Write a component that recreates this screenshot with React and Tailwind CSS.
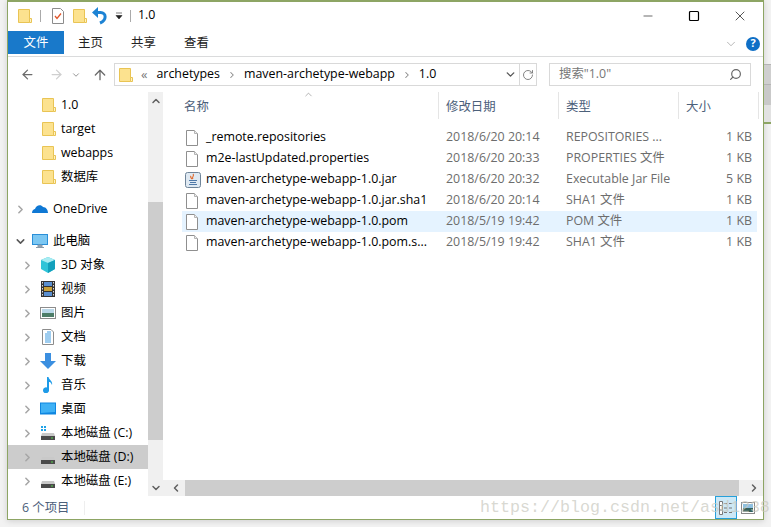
import React from "react";
import { ChevronRight, ChevronDown, ChevronUp, ChevronLeft, ArrowLeft, ArrowRight, ArrowUp, RotateCw, Search, Minus, Square, X } from "lucide-react";

const FONT = '"Open Sans","Noto Sans CJK SC",sans-serif';

function Folder({ s = 16 }) {
  return (
    <svg width={s} height={s} viewBox="0 0 16 16" className="shrink-0">
      <path d="M1.500 1.500H12.500V14.500H1.500Z" fill="#fce28f" stroke="#e9c454" />
      <path d="M12.500 10.500H14.500V14.500H12.500Z" fill="#fff3c4" stroke="#e9c454" />
    </svg>
  );
}
function FileIcon() {
  return (
    <svg width="14" height="16" viewBox="0 0 14 16" className="shrink-0">
      <path d="M1.500 .5H9.500L12.500 3.500V15.500H1.500Z" fill="#fff" stroke="#8f8f8f" />
      <path d="M9.500 .5V3.500H12.500" fill="#eee" stroke="#b5b5b5" />
    </svg>
  );
}
function JarIcon() {
  return (
    <svg width="16" height="16" viewBox="0 0 16 16" className="shrink-0">
      <rect x=".5" y=".5" width="15" height="15" rx="2" fill="#dfe9f2" stroke="#6f8499" />
      <path d="M8 2c2 2-2 3 0 5M6 4c-1 1 0 2 1 3" fill="none" stroke="#e0672a" strokeWidth="1.100" />
      <path d="M4 8.500h8M5 10.500h6M4 12.500h8" stroke="#4f79a8" strokeWidth="1" />
    </svg>
  );
}
function PcIcon() {
  return (
    <svg width="16" height="16" viewBox="0 0 16 16" className="shrink-0">
      <rect x=".5" y="1.500" width="15" height="10" fill="#7cc7f2" stroke="#2a8fd8" />
      <path d="M6 12h4v2H6zM4 14.500h8" fill="#9ab" stroke="#8a9aa8" />
    </svg>
  );
}
function Cube() {
  return (
    <svg width="16" height="16" viewBox="0 0 16 16" className="shrink-0">
      <path d="M8 0L15 3V12L8 16L1 12V3Z" fill="#2fc4d8" />
      <path d="M8 0L15 3L8 6L1 3Z" fill="#a8ecf2" />
      <path d="M8 6L15 3V12L8 16Z" fill="#12a0bc" />
    </svg>
  );
}
function Film() {
  return (
    <svg width="16" height="16" viewBox="0 0 16 16" className="shrink-0">
      <rect x="1" width="14" height="16" fill="#333" />
      <rect x="4" y="1" width="8" height="4" fill="#5a8fd0" />
      <rect x="4" y="6" width="8" height="4" fill="#c9a13a" />
      <rect x="4" y="11" width="8" height="4" fill="#5a8fd0" />
      <path d="M2.500 1v14M13.500 1v14" stroke="#ddd" strokeDasharray="1.500 1.500" />
    </svg>
  );
}
function Pic() {
  return (
    <svg width="16" height="16" viewBox="0 0 16 16" className="shrink-0">
      <rect x=".5" y="2.500" width="15" height="11" fill="#fff" stroke="#8c8c8c" />
      <rect x="2" y="4" width="12" height="4" fill="#b9d7e8" />
      <rect x="2" y="8" width="12" height="4" fill="#4d7d68" />
    </svg>
  );
}
function Doc() {
  return (
    <svg width="16" height="16" viewBox="0 0 16 16" className="shrink-0">
      <path d="M2.500 .5H11L13.500 3V15.500H2.500Z" fill="#fff" stroke="#8c8c8c" />
      <path d="M7 3h4M5 5h6M5 7h6M5 9h6M5 11h6M5 13h6" stroke="#3f9be0" />
    </svg>
  );
}
function Down() {
  return (
    <svg width="16" height="16" viewBox="0 0 16 16" className="shrink-0">
      <path d="M5 0H11V8H16L8 16L0 8H5Z" fill="#3b8fe0" />
    </svg>
  );
}
function Music() {
  return (
    <svg width="16" height="16" viewBox="0 0 16 16" className="shrink-0">
      <path d="M7 0H8.500C9 3 13 4 12 8C11 5.500 10 5 9 5V13A3 3 0 1 1 7 10.500Z" fill="#1e9be8" />
    </svg>
  );
}
function Desk() {
  return (
    <svg width="16" height="16" viewBox="0 0 16 16" className="shrink-0">
      <rect y="1.500" width="16" height="12" fill="#0f86e0" />
      <path d="M1 2.500H15V11L1 12Z" fill="#3fb1f5" />
    </svg>
  );
}
function Drive({ win }) {
  return (
    <svg width="16" height="16" viewBox="0 0 16 16" className="shrink-0">
      {win && <path d="M1 1h2v2H1zM4 1h2v2H4zM1 4h2v2H1zM4 4h2v2H4z" fill="#1fa3e8" />}
      <path d="M2 8H14L15 11H1Z" fill="#c9c9c9" />
      <rect x="1" y="11" width="14" height="4" fill="#4a4a4a" />
      <rect x="11" y="12.500" width="2" height="1" fill="#53d04b" />
    </svg>
  );
}
function Cloud() {
  return (
    <svg width="16" height="16" viewBox="0 0 16 16" className="shrink-0">
      <path d="M0 12C0 9 2 8 3 8C4 4 9 3 11 6C14 6 16 9 16 12Z" fill="#0f78d4" />
    </svg>
  );
}

function NavRow({ icon, label, level = 0, arrow, active, className = "" }) {
  return (
    <div className={`h-6 flex items-center shrink-0 ${active ? "bg-[#cccccc]" : ""} ${className}`}>
      <div className={`flex justify-center shrink-0 ${level === 1 ? "w-[32px] pl-[6px]" : "w-[23px] pl-[1px] mr-[1px]"}`}>
        {arrow === "r" && <ChevronRight size={13} strokeWidth={2.800} className="text-[#a6a6a6]" />}
        {arrow === "d" && <ChevronDown size={13} strokeWidth={2.800} className="text-[#595959]" />}
      </div>
      {icon}
      <span className={`${level === 3 ? "ml-[4px]" : "ml-[5px]"} text-black whitespace-nowrap`}>{label}</span>
    </div>
  );
}

const rows = [
  { i: <FileIcon />, n: "_remote.repositories", d: "2018/6/20 20:14", t: "REPOSITORIES ...", s: "1 KB" },
  { i: <FileIcon />, n: "m2e-lastUpdated.properties", d: "2018/6/20 20:33", t: "PROPERTIES 文件", s: "1 KB" },
  { i: <JarIcon />, n: "maven-archetype-webapp-1.0.jar", d: "2018/6/20 20:32", t: "Executable Jar File", s: "5 KB" },
  { i: <FileIcon />, n: "maven-archetype-webapp-1.0.jar.sha1", d: "2018/6/20 20:14", t: "SHA1 文件", s: "1 KB" },
  { i: <FileIcon />, n: "maven-archetype-webapp-1.0.pom", d: "2018/5/19 19:42", t: "POM 文件", s: "1 KB", sel: true },
  { i: <FileIcon />, n: "maven-archetype-webapp-1.0.pom.s...", d: "2018/5/19 19:42", t: "SHA1 文件", s: "1 KB" },
];

export default function App() {
  return (
    <div className="w-[771px] h-[527px] bg-[#f2f2f2] overflow-hidden relative flex items-start" style={{ fontFamily: FONT }}>
      <div className="ml-[7px] w-[757px] h-[520px] bg-white border border-t-2 border-[#8da564] flex flex-col text-[12.4px] shadow-[0_1px_6px_rgba(0,0,0,0.15)] shrink-0">
        {/* title bar */}
        <div className="h-[29px] flex items-center shrink-0 pl-[9px] -mt-px">
          <Folder />
          <div className="w-px h-3 bg-[#aaa] ml-[7px]" />
          <svg width="14" height="16" viewBox="0 0 14 16" className="ml-[10px]">
            <path d="M1.500 .5H9.500L12.500 3.500V15.500H1.500Z" fill="#fff" stroke="#8c8c8c" />
            <path d="M4 8L6 10.500L10 5.500" fill="none" stroke="#e0562a" strokeWidth="1.300" />
          </svg>
          <div className="ml-[7px]"><Folder /></div>
          <svg width="16" height="18" viewBox="0 0 16 18" className="ml-[4px]">
            <path d="M0 5.500L6 0V11Z" fill="#1d83d4" />
            <path d="M5 5.500H8.500C14.500 5.500 15 13 8 16" fill="none" stroke="#1d83d4" strokeWidth="3" />
          </svg>
          <svg width="8" height="8" viewBox="0 0 8 8" className="ml-[7px]">
            <path d="M1 1h6M1 3.500h6L4 7Z" fill="#222" stroke="#222" strokeWidth=".6" />
          </svg>
          <div className="w-px h-3 bg-[#aaa] ml-[7px]" />
          <span className="ml-[7px] text-black">1.0</span>
          <div className="ml-auto flex items-center text-black">
            <div className="w-[46px] flex justify-center"><Minus size={14} strokeWidth={1} /></div>
            <div className="w-[46px] flex justify-center"><Square size={12} strokeWidth={1.200} absoluteStrokeWidth /></div>
            <div className="w-[46px] flex justify-center"><X size={16} strokeWidth={1} /></div>
          </div>
        </div>
        {/* tabs */}
        <div className="h-[26px] flex shrink-0 border-b border-[#dadbdc] mt-px">
          <div className="h-[23px] w-[56px] pt-[2px] bg-[#1979ca] text-white flex items-center justify-center">文件</div>
          <div className="h-[23px] w-[53px] pt-[2px] flex items-center justify-center text-[#222]">主页</div>
          <div className="h-[23px] w-[53px] pt-[2px] flex items-center justify-center text-[#222]">共享</div>
          <div className="h-[23px] w-[53px] pt-[2px] flex items-center justify-center text-[#222]">查看</div>
          <div className="ml-auto h-[25px] flex items-center pr-[3px] gap-[8px]">
            <ChevronDown size={14} strokeWidth={1.200} className="text-[#9a9a9a]" />
            <div className="w-[14px] h-[14px] rounded-full bg-[#0f6fc6] text-white text-[11px] font-bold flex items-center justify-center">?</div>
          </div>
        </div>
        {/* address bar */}
        <div className="h-[35px] flex items-center shrink-0">
          <ArrowLeft size={15} strokeWidth={2} className="ml-[12px] text-[#6b6b6b]" />
          <ArrowRight size={15} strokeWidth={2} className="ml-[14px] text-[#cfcfcf]" />
          <ChevronDown size={10} strokeWidth={2.200} className="ml-[7px] text-[#8c8c8c]" />
          <ArrowUp size={16} strokeWidth={2} className="ml-[11px] text-[#6b6b6b]" />
          <div className="ml-[6px] w-[423px] h-[23px] border border-[#d9d9d9] flex items-center">
            <div className="ml-[3px]"><Folder /></div>
            <span className="ml-[7px] text-[#777] text-[13px] leading-none">«</span>
            <span className="ml-[9px] text-black">archetypes</span>
            <ChevronRight size={10} strokeWidth={2.500} className="ml-[7px] text-[#888]" />
            <span className="ml-[7px] text-black">maven-archetype-webapp</span>
            <ChevronRight size={10} strokeWidth={2.500} className="ml-[7px] text-[#888]" />
            <span className="ml-[7px] text-black">1.0</span>
            <div className="ml-auto flex items-center h-full">
              <ChevronDown size={13} strokeWidth={2.500} className="mr-[2px] text-[#555]" />
              <div className="w-[17px] h-full border-l border-[#d9d9d9] flex items-center justify-center">
                <RotateCw size={12} strokeWidth={1.800} className="text-[#777]" />
              </div>
            </div>
          </div>
          <div className="ml-[12px] w-[202px] h-[23px] border border-[#d9d9d9] flex items-center pl-[9px] text-[#777]">
            <span>搜索"1.0"</span>
            <Search size={13} strokeWidth={2.200} className="ml-auto mr-[8px] text-[#666] -scale-x-100" />
          </div>
        </div>
        {/* main */}
        <div className="flex-1 flex min-h-0">
          <div className="w-[140px] shrink-0 flex flex-col overflow-hidden pt-px">
            <NavRow level={3} icon={<div className="ml-[9px]"><Folder /></div>} label="1.0" />
            <NavRow level={3} icon={<div className="ml-[9px]"><Folder /></div>} label="target" />
            <NavRow level={3} icon={<div className="ml-[9px]"><Folder /></div>} label="webapps" />
            <NavRow level={3} icon={<div className="ml-[9px]"><Folder /></div>} label="数据库" />
            <NavRow arrow="r" icon={<Cloud />} label="OneDrive" className="mt-[8px]" />
            <NavRow arrow="d" icon={<PcIcon />} label="此电脑" className="mt-[8px]" />
            <NavRow level={1} arrow="r" icon={<Cube />} label="3D 对象" />
            <NavRow level={1} arrow="r" icon={<Film />} label="视频" />
            <NavRow level={1} arrow="r" icon={<Pic />} label="图片" />
            <NavRow level={1} arrow="r" icon={<Doc />} label="文档" />
            <NavRow level={1} arrow="r" icon={<Down />} label="下载" />
            <NavRow level={1} arrow="r" icon={<Music />} label="音乐" />
            <NavRow level={1} arrow="r" icon={<Desk />} label="桌面" />
            <NavRow level={1} arrow="r" icon={<Drive win />} label="本地磁盘 (C:)" />
            <NavRow level={1} arrow="r" icon={<Drive />} label="本地磁盘 (D:)" active />
            <NavRow level={1} arrow="r" icon={<Drive />} label="本地磁盘 (E:)" />
          </div>
          {/* sidebar scrollbar */}
          <div className="w-[15px] shrink-0 bg-[#f0f0f0] flex flex-col items-center">
            <ChevronUp size={12} strokeWidth={3} className="text-[#606060] mt-[3px]" />
            <div className="w-full h-[238px] bg-[#cdcdcd] mt-[95px]" />
            <ChevronDown size={12} strokeWidth={3} className="text-[#606060] mt-auto mb-[2px]" />
          </div>
          {/* file pane */}
          <div className="flex-1 min-w-0 flex flex-col">
            <div className="flex-1 pl-[1px] relative min-h-0">
              <ChevronUp size={11} strokeWidth={1.200} className="absolute left-[140px] top-[-3px] text-[#777]" />
              <div className="h-[27px] flex text-[#4c607a]">
                <div className="w-[275px] pl-[20px] pt-[3px] flex items-center border-r border-[#e5e5e5]">名称</div>
                <div className="w-[120px] pl-[7px] pt-[3px] flex items-center border-r border-[#e5e5e5]">修改日期</div>
                <div className="w-[120px] pl-[7px] pt-[3px] flex items-center border-r border-[#e5e5e5]">类型</div>
                <div className="w-[80px] pl-[7px] pt-[3px] flex items-center border-r border-[#e5e5e5]">大小</div>
              </div>
              <div className="pt-[8px] pl-[18px] pr-[6px]">
                {rows.map((r) => (
                  <div key={r.n} className={`h-[21px] flex items-center ${r.sel ? "bg-[#e5f3ff]" : ""}`}>
                    <div className="w-[24px] pl-[3px] flex justify-start">{r.i}</div>
                    <div className="w-[240px] text-black whitespace-nowrap">{r.n}</div>
                    <div className="w-[120px] text-[#6d6d6d] whitespace-nowrap">{r.d}</div>
                    <div className="w-[120px] text-[#6d6d6d] whitespace-nowrap">{r.t}</div>
                    <div className="w-[66px] text-[#6d6d6d] text-right whitespace-nowrap">{r.s}</div>
                  </div>
                ))}
              </div>
            </div>
            <div className="h-[16px] shrink-0 bg-[#f0f0f0] flex items-center">
              <ChevronLeft size={12} strokeWidth={3} className="ml-[7px] text-[#606060]" />
              <div className="ml-[3px] w-[554px] h-full bg-[#cdcdcd]" />
              <ChevronRight size={12} strokeWidth={3} className="ml-auto mr-[3px] text-[#606060]" />
            </div>
          </div>
        </div>
        {/* status bar */}
        <div className="h-[23px] flex items-center shrink-0 text-[#4c607a]">
          <span className="ml-[14px] pt-px">6 个项目</span>
          <div className="w-px h-[14px] bg-[#eeeeee] ml-[15px]" />
          <div className="ml-auto w-[22px] h-[23px] bg-[#cce8f6] border border-[#26a0da] flex items-center justify-center">
            <svg width="16" height="14" viewBox="0 0 16 14">
              <path d="M1.500 .5h3v13h-3zM1.500 4.500h3M1.500 9h3" fill="#fff" stroke="#777" />
              <path d="M6 2.500h3M11 2.500h3M6 7h3M11 7h3M6 11.500h3M11 11.500h3" stroke="#777" />
            </svg>
          </div>
          <div className="ml-[4px] mr-[8px]"><svg width="14" height="12" viewBox="0 0 14 12">
            <rect x=".5" y=".5" width="13" height="11" fill="#fff" stroke="#888" />
            <rect x="2" y="2" width="10" height="4" fill="#8fc0e0" />
            <rect x="2" y="6" width="10" height="4" fill="#35605a" />
          </svg></div>
        </div>
      </div>
      {/* what shows of the window behind, to the right */}
      <div className="flex-1 h-full flex flex-col">
        <div className="h-[64px]" />
        <div className="h-[20px] bg-[#cfcfcf] border-t border-[#b5b5b5]" />
        <div className="h-[21px] bg-[#c9c9c9] border-t border-[#b5b5b5]" />
        <div className="h-[17px] bg-[#e2e2e2]" />
        <div className="h-[2px] bg-[#8da564]" />
        <div className="flex-1" />
      </div>
      <div className="absolute left-[480px] top-[496px] text-[16.67px] leading-[24px] tracking-normal text-[#c8c8be]/70 whitespace-nowrap" style={{ fontFamily: '"Liberation Mono",monospace' }}>
        https://blog.csdn.net/asd1238
      </div>
    </div>
  );
}
